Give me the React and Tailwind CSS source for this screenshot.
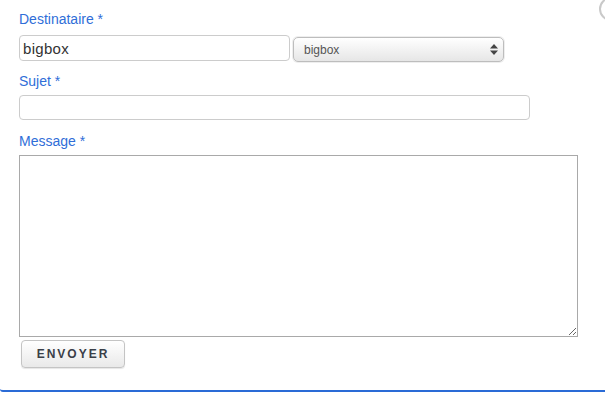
import React from "react";

const Label = ({ children }) => (
  <div className="text-[14px] leading-[16px] text-[#2f6ed8]">{children}</div>
);

export default function App() {
  return (
    <div
      className="relative h-[393px] w-[605px] overflow-hidden bg-white"
      style={{ fontFamily: '"Liberation Sans", Arial, sans-serif' }}
    >
      {/* partially visible close button */}
      <div className="absolute left-[599px] top-[-3px] h-[24px] w-[24px] rounded-full border-2 border-[#c9c9c9] bg-white" />

      <div className="flex h-[392px] flex-col border-b-2 border-[#2a6bd6] rounded-bl-[3px] pl-[19px] pt-[11px]">
        <Label>Destinataire *</Label>
        <div className="mt-[7px] flex items-center gap-[3px]">
          <input
            readOnly
            value="bigbox"
            className="h-[26px] w-[271px] rounded-[4px] border border-[#cccccc] px-[3px] text-[15px] tracking-[0.3px] text-[#333] outline-none"
          />
          <div className="mt-[3px] flex h-[25px] w-[211px] items-center justify-between rounded-[5px] border border-[#bdbdbd] bg-gradient-to-b from-white to-[#e6e6e6] pl-[10px] pr-[5px] shadow-[0_0_0_1px_#eeeeee]">
            <span className="text-[12px] text-[#555]">bigbox</span>
            <svg width="8" height="11" viewBox="0 0 8 11">
              <path d="M4 0 L8 4.5 H0 Z" fill="#444" />
              <path d="M4 11 L8 6.5 H0 Z" fill="#444" />
            </svg>
          </div>
        </div>

        <div className="mt-[11px]">
          <Label>Sujet *</Label>
        </div>
        <input
          readOnly
          className="mt-[6px] h-[25px] w-[511px] rounded-[4px] border border-[#cccccc] px-[3px] text-[15px] outline-none"
        />

        <div className="mt-[13px]">
          <Label>Message *</Label>
        </div>
        <textarea
          readOnly
          className="mt-[6px] block h-[182px] w-[559px] resize border border-[#a9a9a9] outline-none"
        />

        <button className="ml-[2px] mt-[3px] h-[28px] w-[104px] rounded-[4px] border border-[#c4c4c4] bg-gradient-to-b from-white to-[#e9e9e9] text-[12px] font-bold tracking-[2px] text-[#3a3f48] shadow-[0_1px_1px_rgba(0,0,0,0.1)]">
          ENVOYER
        </button>
      </div>
    </div>
  );
}
